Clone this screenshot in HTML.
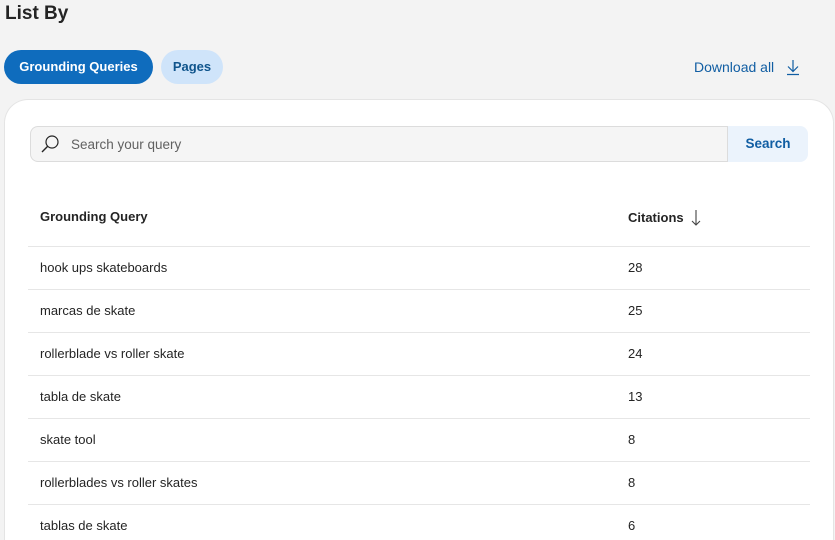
<!DOCTYPE html>
<html style="width:835px;height:540px;overflow:hidden"><head><meta charset="utf-8"><style>
*{box-sizing:border-box;margin:0;padding:0}
body{width:835px;height:540px;overflow:hidden;background:#f3f3f3;font-family:"Liberation Sans",sans-serif;color:#242424;position:relative}
.t{position:absolute;left:5px;top:3px;font-size:19px;font-weight:600;color:#242424}
.pill{position:absolute;top:50px;height:34px;border-radius:17px;font-size:13px;font-weight:bold;line-height:34px;text-align:center}
.p1{left:4px;width:149px;background:#0f6cbd;color:#fff}
.p2{left:161px;width:62px;background:#cfe4fa;color:#0f548c}
.dl{position:absolute;left:694px;top:58px;font-size:14px;color:#115ea3}
.card{position:absolute;left:4px;top:99px;width:830px;height:441px;background:#fff;border:1px solid #e4e4e4;border-bottom:none;border-radius:24px 24px 0 0}
.sb{position:absolute;left:30px;top:126px;width:698px;height:36px;background:#f5f5f5;border:1px solid #dcdcdc;border-right:none;border-radius:8px 0 0 8px}
.sb span{position:absolute;left:40px;top:10px;font-size:13.5px;color:#616161}
.btn{position:absolute;left:727px;top:126px;width:81px;height:36px;background:#ebf3fc;border-radius:0 8px 8px 0;color:#115ea3;font-weight:bold;font-size:13.5px;text-align:center;line-height:36px;border-left:1px solid #dcdcdc}
.row{position:absolute;left:28px;width:782px;height:43px;border-bottom:1px solid #e6e6e6;font-size:13px}
.row div{position:absolute;top:13px}
.a{left:12px}.b{left:600px}
.h{font-weight:600}
</style></head><body>
<div class="t">List By</div>
<div class="pill p1">Grounding Queries</div>
<div class="pill p2">Pages</div>
<div class="dl">Download all <svg width="14" height="18" viewBox="0 0 14 18" style="vertical-align:-4px;margin-left:8px"><path d="M7 2v11M2 8.5l5 5 5-5M1 16.5h12" stroke="#115ea3" stroke-width="1.2" fill="none"/></svg></div>
<div class="card"></div>
<div class="sb"><svg width="22" height="22" viewBox="0 0 22 22" style="position:absolute;left:8px;top:6px"><circle cx="13" cy="9" r="6" stroke="#242424" stroke-width="1.2" fill="none"/><path d="M8.7 13.3L3 19" stroke="#242424" stroke-width="1.4"/></svg><span>Search your query</span></div>
<div class="btn">Search</div>
<div class="row h" style="top:204px"><div class="a" style="top:5px">Grounding Query</div><div class="b" style="top:5px">Citations <svg width="10" height="18" viewBox="0 0 10 18" style="vertical-align:-5px;margin-left:4px"><path d="M5 1v15M1 12l4 4 4-4" stroke="#444" stroke-width="1.1" fill="none"/></svg></div></div>
<div class="row" style="top:247px"><div class="a">hook ups skateboards</div><div class="b">28</div></div>
<div class="row" style="top:290px"><div class="a">marcas de skate</div><div class="b">25</div></div>
<div class="row" style="top:333px"><div class="a">rollerblade vs roller skate</div><div class="b">24</div></div>
<div class="row" style="top:376px"><div class="a">tabla de skate</div><div class="b">13</div></div>
<div class="row" style="top:419px"><div class="a">skate tool</div><div class="b">8</div></div>
<div class="row" style="top:462px"><div class="a">rollerblades vs roller skates</div><div class="b">8</div></div>
<div class="row" style="top:505px;height:35px;border-bottom:none"><div class="a">tablas de skate</div><div class="b">6</div></div>
</body></html>
